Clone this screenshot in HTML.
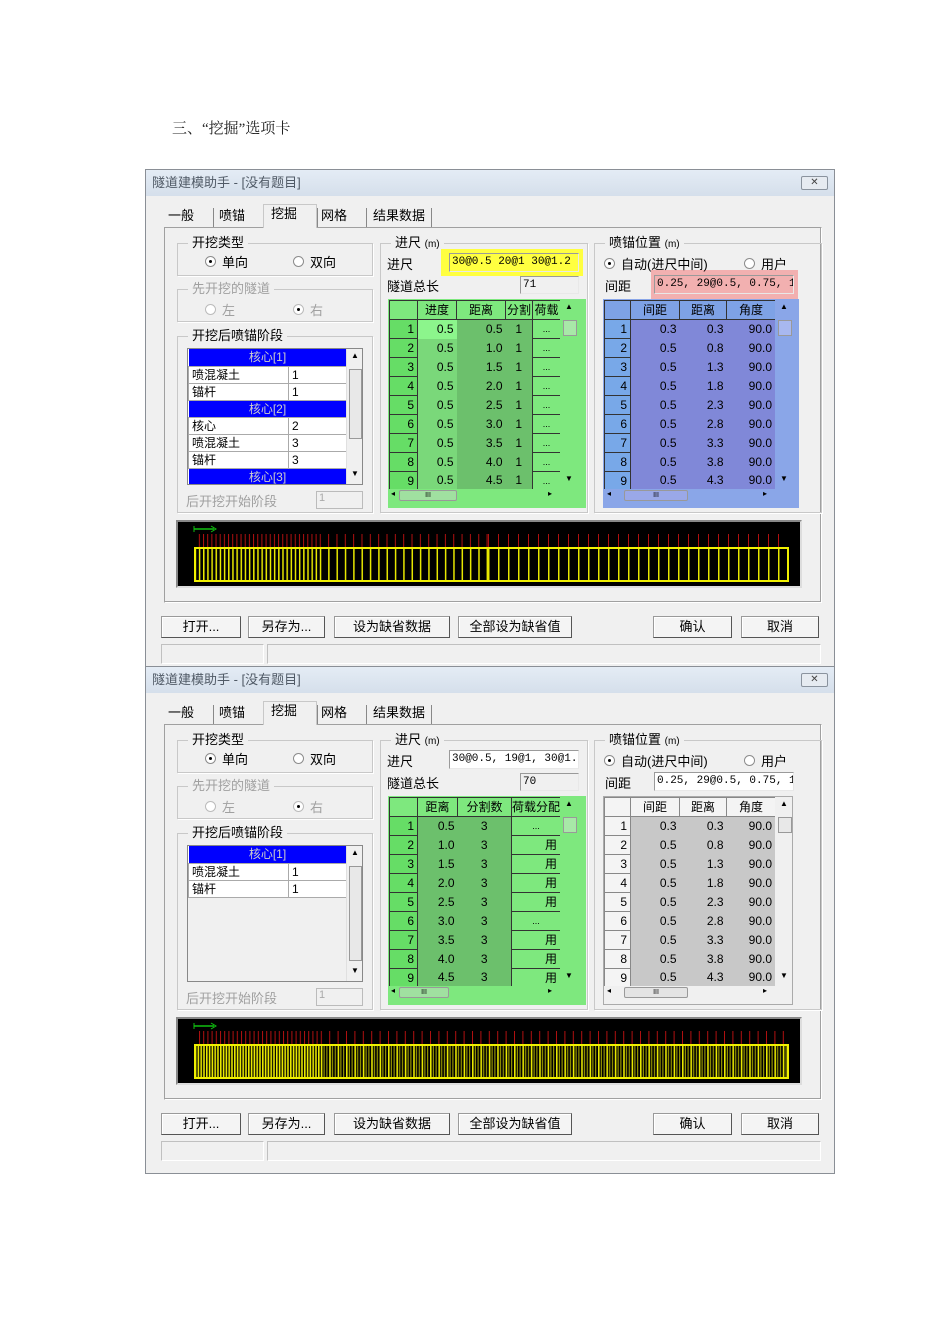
<!DOCTYPE html>
<html><head><meta charset="utf-8"><style>
*{margin:0;padding:0;box-sizing:border-box}
body{width:950px;height:1344px;background:#fff;position:relative;font-family:"Liberation Sans","Noto Sans CJK SC",sans-serif;font-size:13px;color:#000;overflow:hidden}
.a{position:absolute}
.dlg{position:absolute;left:145px;width:690px;background:#f0f0f0;border:1px solid #8a8f96}
.tb{left:0;top:0;width:688px;height:26px;background:linear-gradient(#e4ecf5,#d5dfeb);color:#505a66;font-size:13px;line-height:26px;padding-left:6px}
.x{left:655px;top:6px;width:27px;height:14px;border:1px solid #8a939e;border-radius:2px;background:#e6ebf1;font-size:10px;line-height:12px;text-align:center;color:#444}
.tab{top:36px;height:20px;line-height:20px;font-size:13px}
.sep{top:38px;width:1px;height:19px;background:#888}
.panel{left:18px;top:57px;width:658px;height:376px;border:1px solid #a0a0a0;border-bottom-color:#fff;border-right-color:#fff;box-shadow:inset -1px -1px 0 #a0a0a0}
.grp{border:1px solid #c8c8c8;box-shadow:1px 1px 0 #fff}
.lg{background:#f0f0f0;padding:0 4px;font-size:13px;line-height:14px}
.dis{color:#a0a0a0}
.rad{width:11px;height:11px;border:1px solid #8c8c8c;border-radius:50%;background:#fff}
.rad.on::after{content:"";position:absolute;left:3px;top:3px;width:3px;height:3px;border-radius:50%;background:#000}
.inp{background:#fff;border:1px solid #9a9a9a;border-right-color:#e8e8e8;border-bottom-color:#e8e8e8;font-family:"Liberation Mono",monospace;font-size:11px;line-height:17px;padding-left:2px;white-space:nowrap;overflow:hidden}
table{border-collapse:collapse;table-layout:fixed}
td{height:19px;font-size:12px;line-height:15px;padding:0 3px;white-space:nowrap;overflow:hidden}
.lst td{height:17px;line-height:14px}
.btn{top:446px;height:22px;border:1px solid #9a9a9a;border-right-color:#555;border-bottom-color:#555;background:#f4f4f4;box-shadow:inset 1px 1px 0 #fff;text-align:center;line-height:20px;font-size:13px}
.st{top:474px;height:20px;border:1px solid #c0c0c0;border-right-color:#fff;border-bottom-color:#fff}
.vs{background:#f0f0f0;border-left:1px solid #e0e0e0}
.canvas{left:30px;top:350px;width:626px;height:68px;background:#000;border:2px solid #888;border-right-color:#ddd;border-bottom-color:#ddd}
</style></head><body>
<div class="a" style="left:172px;top:117px;font-family:'Liberation Serif','Noto Serif CJK SC',serif;font-size:15px;color:#222">三、“挖掘”选项卡</div>

<!-- DIALOG 1 -->
<div class="dlg" style="top:169px;height:498px">
<div class="a tb">隧道建模助手 - [没有题目]</div>
<div class="a x">✕</div>
<div class="a panel"></div>
<div class="a tab" style="left:22px">一般</div><div class="a sep" style="left:67px"></div>
<div class="a tab" style="left:73px">喷锚</div><div class="a sep" style="left:171px"></div>
<div class="a" style="left:117px;top:34px;width:54px;height:24px;background:#f0f0f0;border:1px solid #c8c8c8;border-bottom:none"></div>
<div class="a tab" style="left:125px;top:34px">挖掘</div>
<div class="a tab" style="left:175px">网格</div><div class="a sep" style="left:220px"></div>
<div class="a tab" style="left:227px">结果数据</div><div class="a sep" style="left:285px"></div>

<div class="a grp" style="left:31px;top:73px;width:196px;height:33px"></div>
<div class="a lg" style="left:42px;top:66px">开挖类型</div>
<div class="a rad on" style="left:59px;top:86px"></div><div class="a" style="left:76px;top:82px">单向</div>
<div class="a rad" style="left:147px;top:86px"></div><div class="a" style="left:164px;top:82px">双向</div>

<div class="a grp" style="left:31px;top:119px;width:196px;height:33px"></div>
<div class="a lg dis" style="left:42px;top:112px">先开挖的隧道</div>
<div class="a rad" style="left:59px;top:134px;border-color:#bbb"></div><div class="a dis" style="left:76px;top:130px">左</div>
<div class="a rad on" style="left:147px;top:134px;border-color:#bbb"></div><div class="a dis" style="left:164px;top:130px">右</div>

<div class="a grp" style="left:31px;top:166px;width:196px;height:177px"></div>
<div class="a lg" style="left:42px;top:159px">开挖后喷锚阶段</div>
<div class="a" style="left:41px;top:178px;width:176px;height:137px;border:1px solid #888;background:#fff;overflow:hidden">
<table class="lst" style="width:158px"><col style="width:100px"><col style="width:58px">
<tr><td colspan="2" style="background:#0000ff;color:#ccc;text-align:center">核心[1]</td></tr>
<tr><td style="border:1px solid #aaa">喷混凝土</td><td style="border:1px solid #aaa">1</td></tr>
<tr><td style="border:1px solid #aaa">锚杆</td><td style="border:1px solid #aaa">1</td></tr>
<tr><td colspan="2" style="background:#0000ff;color:#ccc;text-align:center">核心[2]</td></tr>
<tr><td style="border:1px solid #aaa">核心</td><td style="border:1px solid #aaa">2</td></tr>
<tr><td style="border:1px solid #aaa">喷混凝土</td><td style="border:1px solid #aaa">3</td></tr>
<tr><td style="border:1px solid #aaa">锚杆</td><td style="border:1px solid #aaa">3</td></tr>
<tr><td colspan="2" style="background:#0000ff;color:#ccc;text-align:center">核心[3]</td></tr>
</table>
<div class="a vs" style="left:158px;top:0;width:17px;height:136px"><div class="a" style="left:2px;top:20px;width:13px;height:70px;border:1px solid #999;background:#e8e8e8"></div><div class="a" style="left:4px;top:2px;font-size:8px">▲</div><div class="a" style="left:4px;top:120px;font-size:8px">▼</div></div>
</div>
<div class="a dis" style="left:40px;top:321px">后开挖开始阶段</div>
<div class="a" style="left:170px;top:321px;width:47px;height:18px;border:1px solid #bbb;color:#aaa;font-size:11px;padding-left:2px">1</div>

<!-- 进尺 group -->
<div class="a grp" style="left:234px;top:73px;width:208px;height:270px"></div>
<div class="a lg" style="left:245px;top:66px">进尺 <span style="font-size:10px">(m)</span></div>
<div class="a" style="left:241px;top:84px">进尺</div>
<div class="a" style="left:295px;top:79px;width:142px;height:27px;background:#ffff40"></div>
<div class="a inp" style="left:303px;top:83px;width:130px;height:19px;background:#ffff40">30@0.5 20@1 30@1.2</div>
<div class="a" style="left:241px;top:106px">隧道总长</div>
<div class="a inp" style="left:374px;top:106px;width:59px;height:18px;background:#f0f0f0">71</div>
<div class="a" style="left:242px;top:129px;width:198px;height:209px;background:#7ee87e"></div>
<div class="a" style="left:243px;top:130px;width:171px;height:189px;overflow:hidden">
<table style="width:171px;border:1px solid #333"><col style="width:28px"><col style="width:39px"><col style="width:49px"><col style="width:27px"><col style="width:28px">
<tr style="text-align:center"><td style="border:1px solid #333"></td><td style="border:1px solid #333">进度</td><td style="border:1px solid #333">距离</td><td style="border:1px solid #333;padding:0">分割</td><td style="border:1px solid #333;padding:0">荷载</td></tr>
<tr><td style="text-align:right;border:1px solid #333;background:#66dd66">1</td><td style="text-align:right;background:#8cf58c">0.5</td><td style="text-align:right;background:#6cc06c">0.5</td><td style="text-align:center;background:#6cc06c">1</td><td style="border:1px solid #333;text-align:center;font-size:9px">...</td></tr>
<tr><td style="text-align:right;border:1px solid #333;background:#66dd66">2</td><td style="text-align:right;background:#7ad87a">0.5</td><td style="text-align:right;background:#6cc06c">1.0</td><td style="text-align:center;background:#6cc06c">1</td><td style="border:1px solid #333;text-align:center;font-size:9px">...</td></tr>
<tr><td style="text-align:right;border:1px solid #333;background:#66dd66">3</td><td style="text-align:right;background:#7ad87a">0.5</td><td style="text-align:right;background:#6cc06c">1.5</td><td style="text-align:center;background:#6cc06c">1</td><td style="border:1px solid #333;text-align:center;font-size:9px">...</td></tr>
<tr><td style="text-align:right;border:1px solid #333;background:#66dd66">4</td><td style="text-align:right;background:#7ad87a">0.5</td><td style="text-align:right;background:#6cc06c">2.0</td><td style="text-align:center;background:#6cc06c">1</td><td style="border:1px solid #333;text-align:center;font-size:9px">...</td></tr>
<tr><td style="text-align:right;border:1px solid #333;background:#66dd66">5</td><td style="text-align:right;background:#7ad87a">0.5</td><td style="text-align:right;background:#6cc06c">2.5</td><td style="text-align:center;background:#6cc06c">1</td><td style="border:1px solid #333;text-align:center;font-size:9px">...</td></tr>
<tr><td style="text-align:right;border:1px solid #333;background:#66dd66">6</td><td style="text-align:right;background:#7ad87a">0.5</td><td style="text-align:right;background:#6cc06c">3.0</td><td style="text-align:center;background:#6cc06c">1</td><td style="border:1px solid #333;text-align:center;font-size:9px">...</td></tr>
<tr><td style="text-align:right;border:1px solid #333;background:#66dd66">7</td><td style="text-align:right;background:#7ad87a">0.5</td><td style="text-align:right;background:#6cc06c">3.5</td><td style="text-align:center;background:#6cc06c">1</td><td style="border:1px solid #333;text-align:center;font-size:9px">...</td></tr>
<tr><td style="text-align:right;border:1px solid #333;background:#66dd66">8</td><td style="text-align:right;background:#7ad87a">0.5</td><td style="text-align:right;background:#6cc06c">4.0</td><td style="text-align:center;background:#6cc06c">1</td><td style="border:1px solid #333;text-align:center;font-size:9px">...</td></tr>
<tr><td style="text-align:right;border:1px solid #333;background:#66dd66">9</td><td style="text-align:right;background:#7ad87a">0.5</td><td style="text-align:right;background:#6cc06c">4.5</td><td style="text-align:center;background:#6cc06c">1</td><td style="border:1px solid #333;text-align:center;font-size:9px">...</td></tr>
</table></div>
<div class="a" style="left:417px;top:150px;width:14px;height:16px;border:1px solid #999;background:#a8e8a8"></div>
<div class="a" style="left:419px;top:132px;font-size:8px">▲</div><div class="a" style="left:419px;top:304px;font-size:8px">▼</div>
<div class="a" style="left:253px;top:320px;width:58px;height:11px;border:1px solid #999;border-radius:2px;background:#a0e0a0;font-size:7px;text-align:center;line-height:9px">III</div>
<div class="a" style="left:245px;top:319px;font-size:8px">◂</div><div class="a" style="left:402px;top:319px;font-size:8px">▸</div>

<!-- 喷锚位置 -->
<div class="a grp" style="left:448px;top:73px;width:228px;height:270px"></div>
<div class="a lg" style="left:459px;top:66px">喷锚位置 <span style="font-size:10px">(m)</span></div>
<div class="a" style="left:505px;top:100px;width:147px;height:29px;background:#f2b0b0"></div>
<div class="a rad on" style="left:458px;top:88px"></div><div class="a" style="left:475px;top:84px">自动(进尺中间)</div>
<div class="a rad" style="left:598px;top:88px"></div><div class="a" style="left:615px;top:84px">用户</div>
<div class="a" style="left:459px;top:106px">间距</div>
<div class="a inp" style="left:508px;top:105px;width:140px;height:19px;background:#f2b0b0">0.25, 29@0.5, 0.75, 1</div>
<div class="a" style="left:457px;top:129px;width:196px;height:209px;background:#8aa6e8"></div>
<div class="a" style="left:458px;top:130px;width:171px;height:189px;overflow:hidden">
<table style="width:171px;border:1px solid #333;text-align:right"><col style="width:26px"><col style="width:49px"><col style="width:47px"><col style="width:49px">
<tr style="text-align:center"><td style="border:1px solid #333;background:#7ea2e6"></td><td style="border:1px solid #333;background:#7ea2e6">间距</td><td style="border:1px solid #333;background:#7ea2e6">距离</td><td style="border:1px solid #333;background:#7ea2e6">角度</td></tr>
<tr style="background:#8088d8"><td style="border:1px solid #333;background:#78a8e8">1</td><td>0.3</td><td>0.3</td><td>90.0</td></tr>
<tr style="background:#8088d8"><td style="border:1px solid #333;background:#78a8e8">2</td><td>0.5</td><td>0.8</td><td>90.0</td></tr>
<tr style="background:#8088d8"><td style="border:1px solid #333;background:#78a8e8">3</td><td>0.5</td><td>1.3</td><td>90.0</td></tr>
<tr style="background:#8088d8"><td style="border:1px solid #333;background:#78a8e8">4</td><td>0.5</td><td>1.8</td><td>90.0</td></tr>
<tr style="background:#8088d8"><td style="border:1px solid #333;background:#78a8e8">5</td><td>0.5</td><td>2.3</td><td>90.0</td></tr>
<tr style="background:#8088d8"><td style="border:1px solid #333;background:#78a8e8">6</td><td>0.5</td><td>2.8</td><td>90.0</td></tr>
<tr style="background:#8088d8"><td style="border:1px solid #333;background:#78a8e8">7</td><td>0.5</td><td>3.3</td><td>90.0</td></tr>
<tr style="background:#8088d8"><td style="border:1px solid #333;background:#78a8e8">8</td><td>0.5</td><td>3.8</td><td>90.0</td></tr>
<tr style="background:#8088d8"><td style="border:1px solid #333;background:#78a8e8">9</td><td>0.5</td><td>4.3</td><td>90.0</td></tr>
</table></div>
<div class="a" style="left:632px;top:150px;width:14px;height:16px;border:1px solid #999;background:#a8b8f0"></div>
<div class="a" style="left:634px;top:132px;font-size:8px">▲</div><div class="a" style="left:634px;top:304px;font-size:8px">▼</div>
<div class="a" style="left:478px;top:320px;width:64px;height:11px;border:1px solid #999;border-radius:2px;background:#9aa8e8;font-size:7px;text-align:center;line-height:9px">III</div>
<div class="a" style="left:461px;top:319px;font-size:8px">◂</div><div class="a" style="left:617px;top:319px;font-size:8px">▸</div>

<div class="a canvas"><svg width="622" height="64" style="position:absolute;left:0;top:0">
<defs>
<pattern id="r1" width="4.17" height="14" patternUnits="userSpaceOnUse"><rect x="0" width="1" height="14" fill="#b01010"/></pattern>
<pattern id="r2" width="8.34" height="14" patternUnits="userSpaceOnUse"><rect x="0" width="1" height="14" fill="#b01010"/></pattern>
<pattern id="r3" width="10" height="14" patternUnits="userSpaceOnUse"><rect x="0" width="1" height="14" fill="#b01010"/></pattern>
<pattern id="y1" width="4.17" height="34" patternUnits="userSpaceOnUse"><rect x="0" width="1.5" height="34" fill="#e8e800"/></pattern>
<pattern id="y2" width="8.34" height="34" patternUnits="userSpaceOnUse"><rect x="0" width="1.5" height="34" fill="#e8e800"/></pattern>
<pattern id="y3" width="10" height="34" patternUnits="userSpaceOnUse"><rect x="0" width="1.5" height="34" fill="#e8e800"/></pattern>
</defs>
<line x1="16" y1="7" x2="36" y2="7" stroke="#10c010" stroke-width="1.5"/><line x1="16" y1="4" x2="16" y2="10" stroke="#10c010"/><path d="M33 4 L38 7 L33 10" fill="none" stroke="#10c010"/>
<rect x="18" y="12" width="125" height="14" fill="url(#r1)"/>
<rect x="143" y="12" width="167" height="14" fill="url(#r2)"/>
<rect x="310" y="12" width="300" height="14" fill="url(#r3)"/>
<rect x="18" y="27" width="125" height="33" fill="url(#y1)"/>
<rect x="143" y="27" width="167" height="33" fill="url(#y2)"/>
<rect x="310" y="27" width="300" height="33" fill="url(#y3)"/>
<rect x="17" y="26" width="593" height="33" fill="none" stroke="#f0f000" stroke-width="2"/>
</svg></div>

<div class="a btn" style="left:15px;width:80px">打开...</div>
<div class="a btn" style="left:102px;width:77px">另存为...</div>
<div class="a btn" style="left:188px;width:116px">设为缺省数据</div>
<div class="a btn" style="left:312px;width:114px">全部设为缺省值</div>
<div class="a btn" style="left:507px;width:79px">确认</div>
<div class="a btn" style="left:595px;width:78px">取消</div>
<div class="a st" style="left:15px;width:103px"></div>
<div class="a st" style="left:121px;width:554px"></div>
</div>

<!-- DIALOG 2 -->
<div class="dlg" style="top:666px;height:508px">
<div class="a tb">隧道建模助手 - [没有题目]</div>
<div class="a x">✕</div>
<div class="a panel"></div>
<div class="a tab" style="left:22px">一般</div><div class="a sep" style="left:67px"></div>
<div class="a tab" style="left:73px">喷锚</div><div class="a sep" style="left:171px"></div>
<div class="a" style="left:117px;top:34px;width:54px;height:24px;background:#f0f0f0;border:1px solid #c8c8c8;border-bottom:none"></div>
<div class="a tab" style="left:125px;top:34px">挖掘</div>
<div class="a tab" style="left:175px">网格</div><div class="a sep" style="left:220px"></div>
<div class="a tab" style="left:227px">结果数据</div><div class="a sep" style="left:285px"></div>

<div class="a grp" style="left:31px;top:73px;width:196px;height:33px"></div>
<div class="a lg" style="left:42px;top:66px">开挖类型</div>
<div class="a rad on" style="left:59px;top:86px"></div><div class="a" style="left:76px;top:82px">单向</div>
<div class="a rad" style="left:147px;top:86px"></div><div class="a" style="left:164px;top:82px">双向</div>

<div class="a grp" style="left:31px;top:119px;width:196px;height:33px"></div>
<div class="a lg dis" style="left:42px;top:112px">先开挖的隧道</div>
<div class="a rad" style="left:59px;top:134px;border-color:#bbb"></div><div class="a dis" style="left:76px;top:130px">左</div>
<div class="a rad on" style="left:147px;top:134px;border-color:#bbb"></div><div class="a dis" style="left:164px;top:130px">右</div>

<div class="a grp" style="left:31px;top:166px;width:196px;height:177px"></div>
<div class="a lg" style="left:42px;top:159px">开挖后喷锚阶段</div>
<div class="a" style="left:41px;top:178px;width:176px;height:137px;border:1px solid #888;background:#f0f0f0;overflow:hidden">
<table class="lst" style="width:158px;background:#fff"><col style="width:100px"><col style="width:58px">
<tr><td colspan="2" style="background:#0000ff;color:#ccc;text-align:center">核心[1]</td></tr>
<tr><td style="border:1px solid #aaa">喷混凝土</td><td style="border:1px solid #aaa">1</td></tr>
<tr><td style="border:1px solid #aaa">锚杆</td><td style="border:1px solid #aaa">1</td></tr>
</table>
<div class="a vs" style="left:158px;top:0;width:17px;height:136px"><div class="a" style="left:2px;top:20px;width:13px;height:95px;border:1px solid #999;background:#e8e8e8"></div><div class="a" style="left:4px;top:2px;font-size:8px">▲</div><div class="a" style="left:4px;top:120px;font-size:8px">▼</div></div>
</div>
<div class="a dis" style="left:40px;top:321px">后开挖开始阶段</div>
<div class="a" style="left:170px;top:321px;width:47px;height:18px;border:1px solid #bbb;color:#aaa;font-size:11px;padding-left:2px">1</div>

<div class="a grp" style="left:234px;top:73px;width:208px;height:270px"></div>
<div class="a lg" style="left:245px;top:66px">进尺 <span style="font-size:10px">(m)</span></div>
<div class="a" style="left:241px;top:84px">进尺</div>
<div class="a inp" style="left:303px;top:83px;width:130px;height:19px">30@0.5, 19@1, 30@1.2</div>
<div class="a" style="left:241px;top:106px">隧道总长</div>
<div class="a inp" style="left:374px;top:106px;width:59px;height:18px;background:#f0f0f0">70</div>
<div class="a" style="left:242px;top:129px;width:198px;height:209px;background:#7ee87e"></div>
<div class="a" style="left:243px;top:130px;width:171px;height:189px;overflow:hidden">
<table style="width:171px;border:1px solid #333"><col style="width:28px"><col style="width:40px"><col style="width:54px"><col style="width:49px">
<tr style="text-align:center"><td style="border:1px solid #333"></td><td style="border:1px solid #333">距离</td><td style="border:1px solid #333">分割数</td><td style="border:1px solid #333;padding:0">荷载分配</td></tr>
<tr><td style="text-align:right;border:1px solid #333;background:#66dd66">1</td><td style="text-align:right;background:#6cc06c">0.5</td><td style="text-align:center;background:#6cc06c">3</td><td style="border:1px solid #333;text-align:center;font-size:9px">...</td></tr>
<tr><td style="text-align:right;border:1px solid #333;background:#66dd66">2</td><td style="text-align:right;background:#6cc06c">1.0</td><td style="text-align:center;background:#6cc06c">3</td><td style="border:1px solid #333;text-align:right">用</td></tr>
<tr><td style="text-align:right;border:1px solid #333;background:#66dd66">3</td><td style="text-align:right;background:#6cc06c">1.5</td><td style="text-align:center;background:#6cc06c">3</td><td style="border:1px solid #333;text-align:right">用</td></tr>
<tr><td style="text-align:right;border:1px solid #333;background:#66dd66">4</td><td style="text-align:right;background:#6cc06c">2.0</td><td style="text-align:center;background:#6cc06c">3</td><td style="border:1px solid #333;text-align:right">用</td></tr>
<tr><td style="text-align:right;border:1px solid #333;background:#66dd66">5</td><td style="text-align:right;background:#6cc06c">2.5</td><td style="text-align:center;background:#6cc06c">3</td><td style="border:1px solid #333;text-align:right">用</td></tr>
<tr><td style="text-align:right;border:1px solid #333;background:#66dd66">6</td><td style="text-align:right;background:#6cc06c">3.0</td><td style="text-align:center;background:#6cc06c">3</td><td style="border:1px solid #333;text-align:center;font-size:9px">...</td></tr>
<tr><td style="text-align:right;border:1px solid #333;background:#66dd66">7</td><td style="text-align:right;background:#6cc06c">3.5</td><td style="text-align:center;background:#6cc06c">3</td><td style="border:1px solid #333;text-align:right">用</td></tr>
<tr><td style="text-align:right;border:1px solid #333;background:#66dd66">8</td><td style="text-align:right;background:#6cc06c">4.0</td><td style="text-align:center;background:#6cc06c">3</td><td style="border:1px solid #333;text-align:right">用</td></tr>
<tr><td style="text-align:right;border:1px solid #333;background:#66dd66">9</td><td style="text-align:right;background:#6cc06c">4.5</td><td style="text-align:center;background:#6cc06c">3</td><td style="border:1px solid #333;text-align:right">用</td></tr>
</table></div>
<div class="a" style="left:417px;top:150px;width:14px;height:16px;border:1px solid #999;background:#a8e8a8"></div>
<div class="a" style="left:419px;top:132px;font-size:8px">▲</div><div class="a" style="left:419px;top:304px;font-size:8px">▼</div>
<div class="a" style="left:253px;top:320px;width:50px;height:11px;border:1px solid #999;border-radius:2px;background:#a0e0a0;font-size:7px;text-align:center;line-height:9px">III</div>
<div class="a" style="left:245px;top:319px;font-size:8px">◂</div><div class="a" style="left:402px;top:319px;font-size:8px">▸</div>

<div class="a grp" style="left:448px;top:73px;width:228px;height:270px"></div>
<div class="a lg" style="left:459px;top:66px">喷锚位置 <span style="font-size:10px">(m)</span></div>
<div class="a rad on" style="left:458px;top:88px"></div><div class="a" style="left:475px;top:84px">自动(进尺中间)</div>
<div class="a rad" style="left:598px;top:88px"></div><div class="a" style="left:615px;top:84px">用户</div>
<div class="a" style="left:459px;top:106px">间距</div>
<div class="a inp" style="left:508px;top:105px;width:140px;height:19px">0.25, 29@0.5, 0.75, 1</div>
<div class="a" style="left:457px;top:129px;width:190px;height:209px;background:#f0f0f0;border:1px solid #aaa"></div>
<div class="a" style="left:458px;top:130px;width:171px;height:189px;overflow:hidden">
<table style="width:171px;border:1px solid #888;text-align:right"><col style="width:26px"><col style="width:49px"><col style="width:47px"><col style="width:49px">
<tr style="text-align:center"><td style="border:1px solid #888;background:#f4f4f4"></td><td style="border:1px solid #888;background:#f4f4f4">间距</td><td style="border:1px solid #888;background:#f4f4f4">距离</td><td style="border:1px solid #888;background:#f4f4f4">角度</td></tr>
<tr style="background:#c8c8c8"><td style="border:1px solid #888;background:#f4f4f4">1</td><td>0.3</td><td>0.3</td><td>90.0</td></tr>
<tr style="background:#c8c8c8"><td style="border:1px solid #888;background:#f4f4f4">2</td><td>0.5</td><td>0.8</td><td>90.0</td></tr>
<tr style="background:#c8c8c8"><td style="border:1px solid #888;background:#f4f4f4">3</td><td>0.5</td><td>1.3</td><td>90.0</td></tr>
<tr style="background:#c8c8c8"><td style="border:1px solid #888;background:#f4f4f4">4</td><td>0.5</td><td>1.8</td><td>90.0</td></tr>
<tr style="background:#c8c8c8"><td style="border:1px solid #888;background:#f4f4f4">5</td><td>0.5</td><td>2.3</td><td>90.0</td></tr>
<tr style="background:#c8c8c8"><td style="border:1px solid #888;background:#f4f4f4">6</td><td>0.5</td><td>2.8</td><td>90.0</td></tr>
<tr style="background:#c8c8c8"><td style="border:1px solid #888;background:#f4f4f4">7</td><td>0.5</td><td>3.3</td><td>90.0</td></tr>
<tr style="background:#c8c8c8"><td style="border:1px solid #888;background:#f4f4f4">8</td><td>0.5</td><td>3.8</td><td>90.0</td></tr>
<tr style="background:#c8c8c8"><td style="border:1px solid #888;background:#f4f4f4">9</td><td>0.5</td><td>4.3</td><td>90.0</td></tr>
</table></div>
<div class="a" style="left:632px;top:150px;width:14px;height:16px;border:1px solid #999;background:#e8e8e8"></div>
<div class="a" style="left:634px;top:132px;font-size:8px">▲</div><div class="a" style="left:634px;top:304px;font-size:8px">▼</div>
<div class="a" style="left:478px;top:320px;width:64px;height:11px;border:1px solid #999;border-radius:2px;background:#e4e4e4;font-size:7px;text-align:center;line-height:9px">III</div>
<div class="a" style="left:461px;top:319px;font-size:8px">◂</div><div class="a" style="left:617px;top:319px;font-size:8px">▸</div>

<div class="a canvas" style="height:68px"><svg width="622" height="64" style="position:absolute;left:0;top:0">
<defs>
<pattern id="q1" width="4.2" height="14" patternUnits="userSpaceOnUse"><rect x="0" width="1" height="14" fill="#b01010"/></pattern>
<pattern id="q2" width="8.4" height="14" patternUnits="userSpaceOnUse"><rect x="0" width="1" height="14" fill="#b01010"/></pattern>
<pattern id="z1" width="2.8" height="34" patternUnits="userSpaceOnUse"><rect x="0" width="1.6" height="34" fill="#e8e800"/></pattern>
<pattern id="z2" width="8.4" height="34" patternUnits="userSpaceOnUse"><rect x="0" width="1.6" height="34" fill="#e8e800"/><rect x="2.8" width="1" height="34" fill="#b0b000"/><rect x="5.6" width="1" height="34" fill="#b0b000"/></pattern>
</defs>
<line x1="16" y1="7" x2="36" y2="7" stroke="#10c010" stroke-width="1.5"/><line x1="16" y1="4" x2="16" y2="10" stroke="#10c010"/><path d="M33 4 L38 7 L33 10" fill="none" stroke="#10c010"/>
<rect x="18" y="12" width="127" height="14" fill="url(#q1)"/>
<rect x="145" y="12" width="465" height="14" fill="url(#q2)"/>
<rect x="18" y="27" width="127" height="33" fill="url(#z1)"/>
<rect x="145" y="27" width="465" height="33" fill="url(#z2)"/>
<rect x="17" y="26" width="593" height="33" fill="none" stroke="#f0f000" stroke-width="2"/>
</svg></div>

<div class="a btn" style="left:15px;width:80px">打开...</div>
<div class="a btn" style="left:102px;width:77px">另存为...</div>
<div class="a btn" style="left:188px;width:116px">设为缺省数据</div>
<div class="a btn" style="left:312px;width:114px">全部设为缺省值</div>
<div class="a btn" style="left:507px;width:79px">确认</div>
<div class="a btn" style="left:595px;width:78px">取消</div>
<div class="a st" style="left:15px;width:103px"></div>
<div class="a st" style="left:121px;width:554px"></div>
</div>
</body></html>
